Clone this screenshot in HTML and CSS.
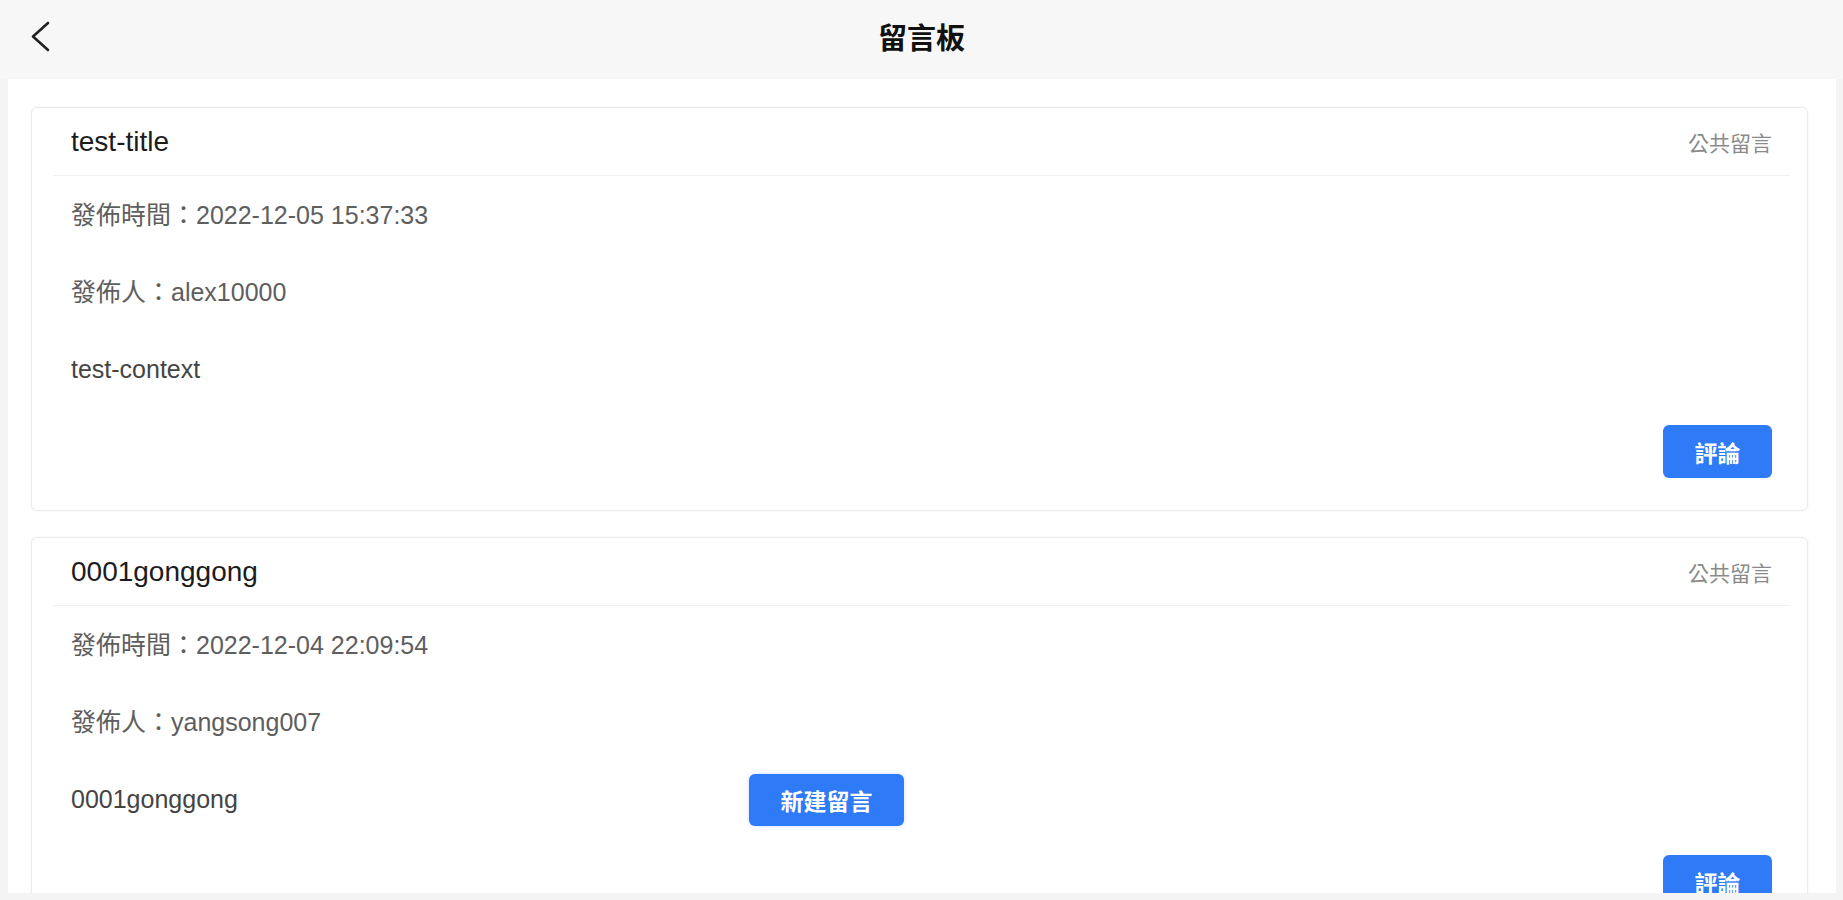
FILE: index.html
```html
<!DOCTYPE html>
<html lang="zh-Hant">
<head>
  <meta charset="utf-8">
  <title>留言板</title>
  <link rel="stylesheet" href="styles.css">
</head>
<body>
  <div class="navbar">
    <a class="back" href="#">
      <svg width="20" height="32" viewBox="0 0 20 32"><polyline points="17,2 2,15.5 17,29" fill="none" stroke="#222" stroke-width="2.6" stroke-linecap="round" stroke-linejoin="round"/></svg>
    </a>
    <h1>留言板</h1>
  </div>

  <div class="board">
    <div class="card">
      <div class="card-head">
        <span class="card-title">test-title</span>
        <span class="card-tag">公共留言</span>
      </div>
      <div class="card-body">
        <p>發佈時間：2022-12-05 15:37:33</p>
        <p>發佈人：alex10000</p>
        <p class="content">test-context</p>
        <div class="card-foot">
          <button class="btn">評論</button>
        </div>
      </div>
    </div>

    <div class="card">
      <div class="card-head">
        <span class="card-title">0001gonggong</span>
        <span class="card-tag">公共留言</span>
      </div>
      <div class="card-body">
        <p>發佈時間：2022-12-04 22:09:54</p>
        <p>發佈人：yangsong007</p>
        <p class="content">0001gonggong</p>
        <div class="card-foot">
          <button class="btn">評論</button>
        </div>
      </div>
    </div>

    <button class="btn btn-new">新建留言</button>
  </div>
</body>
</html>
```

FILE: styles.css
```css
body {
  margin: 0;
  background-color: #f4f4f4;
  font-family: "Liberation Sans", "Noto Sans CJK TC", sans-serif;
  color: #333;
}

.navbar {
  position: relative;
  height: 79px;
  background-color: #f7f7f7;
  display: flex;
  align-items: center;
  justify-content: center;
}

.navbar h1 {
  margin: 0;
  font-size: 29px;
  font-weight: bold;
  color: #111;
  line-height: 1;
}

.back {
  position: absolute;
  left: 31px;
  top: 21px;
  display: block;
  width: 20px;
  height: 32px;
}

.board {
  position: relative;
  height: 786px;
  margin: 0 7px 0 8px;
  padding: 28px 28px 0 23px;
  background-color: #fff;
  overflow: hidden;
}

.card {
  border: 1px solid #ebebeb;
  border-radius: 6px;
  box-shadow: 0 0 3px rgba(0, 0, 0, 0.05);
  background-color: #fff;
  margin-bottom: 26px;
}

.card-head {
  height: 67px;
  margin: 0 17px 0 21px;
  padding: 0 18px;
  border-bottom: 1px solid #f0f0f0;
  display: flex;
  align-items: center;
  justify-content: space-between;
}

.card-title {
  font-size: 28px;
  color: #1c1c1c;
}

.card-tag {
  font-size: 21px;
  color: #8a8a8a;
}

.card-body {
  padding: 1px 35px 32px 39px;
}

.card-body p {
  margin: 0;
  line-height: 77px;
  font-size: 25px;
  color: #5e5e5e;
}

.card-body .content {
  color: #444;
}

.card-foot {
  display: flex;
  justify-content: flex-end;
  margin-top: 17px;
}

.btn {
  width: 109px;
  height: 53px;
  padding: 0;
  border: none;
  border-radius: 6px;
  background-color: #2f7af6;
  color: #fff;
  font-family: inherit;
  font-size: 23px;
  font-weight: bold;
}

.btn-new {
  position: absolute;
  left: 741px;
  top: 695px;
  width: 155px;
  height: 52px;
  box-shadow: 0 0 4px rgba(47, 122, 246, 0.25);
}
```
